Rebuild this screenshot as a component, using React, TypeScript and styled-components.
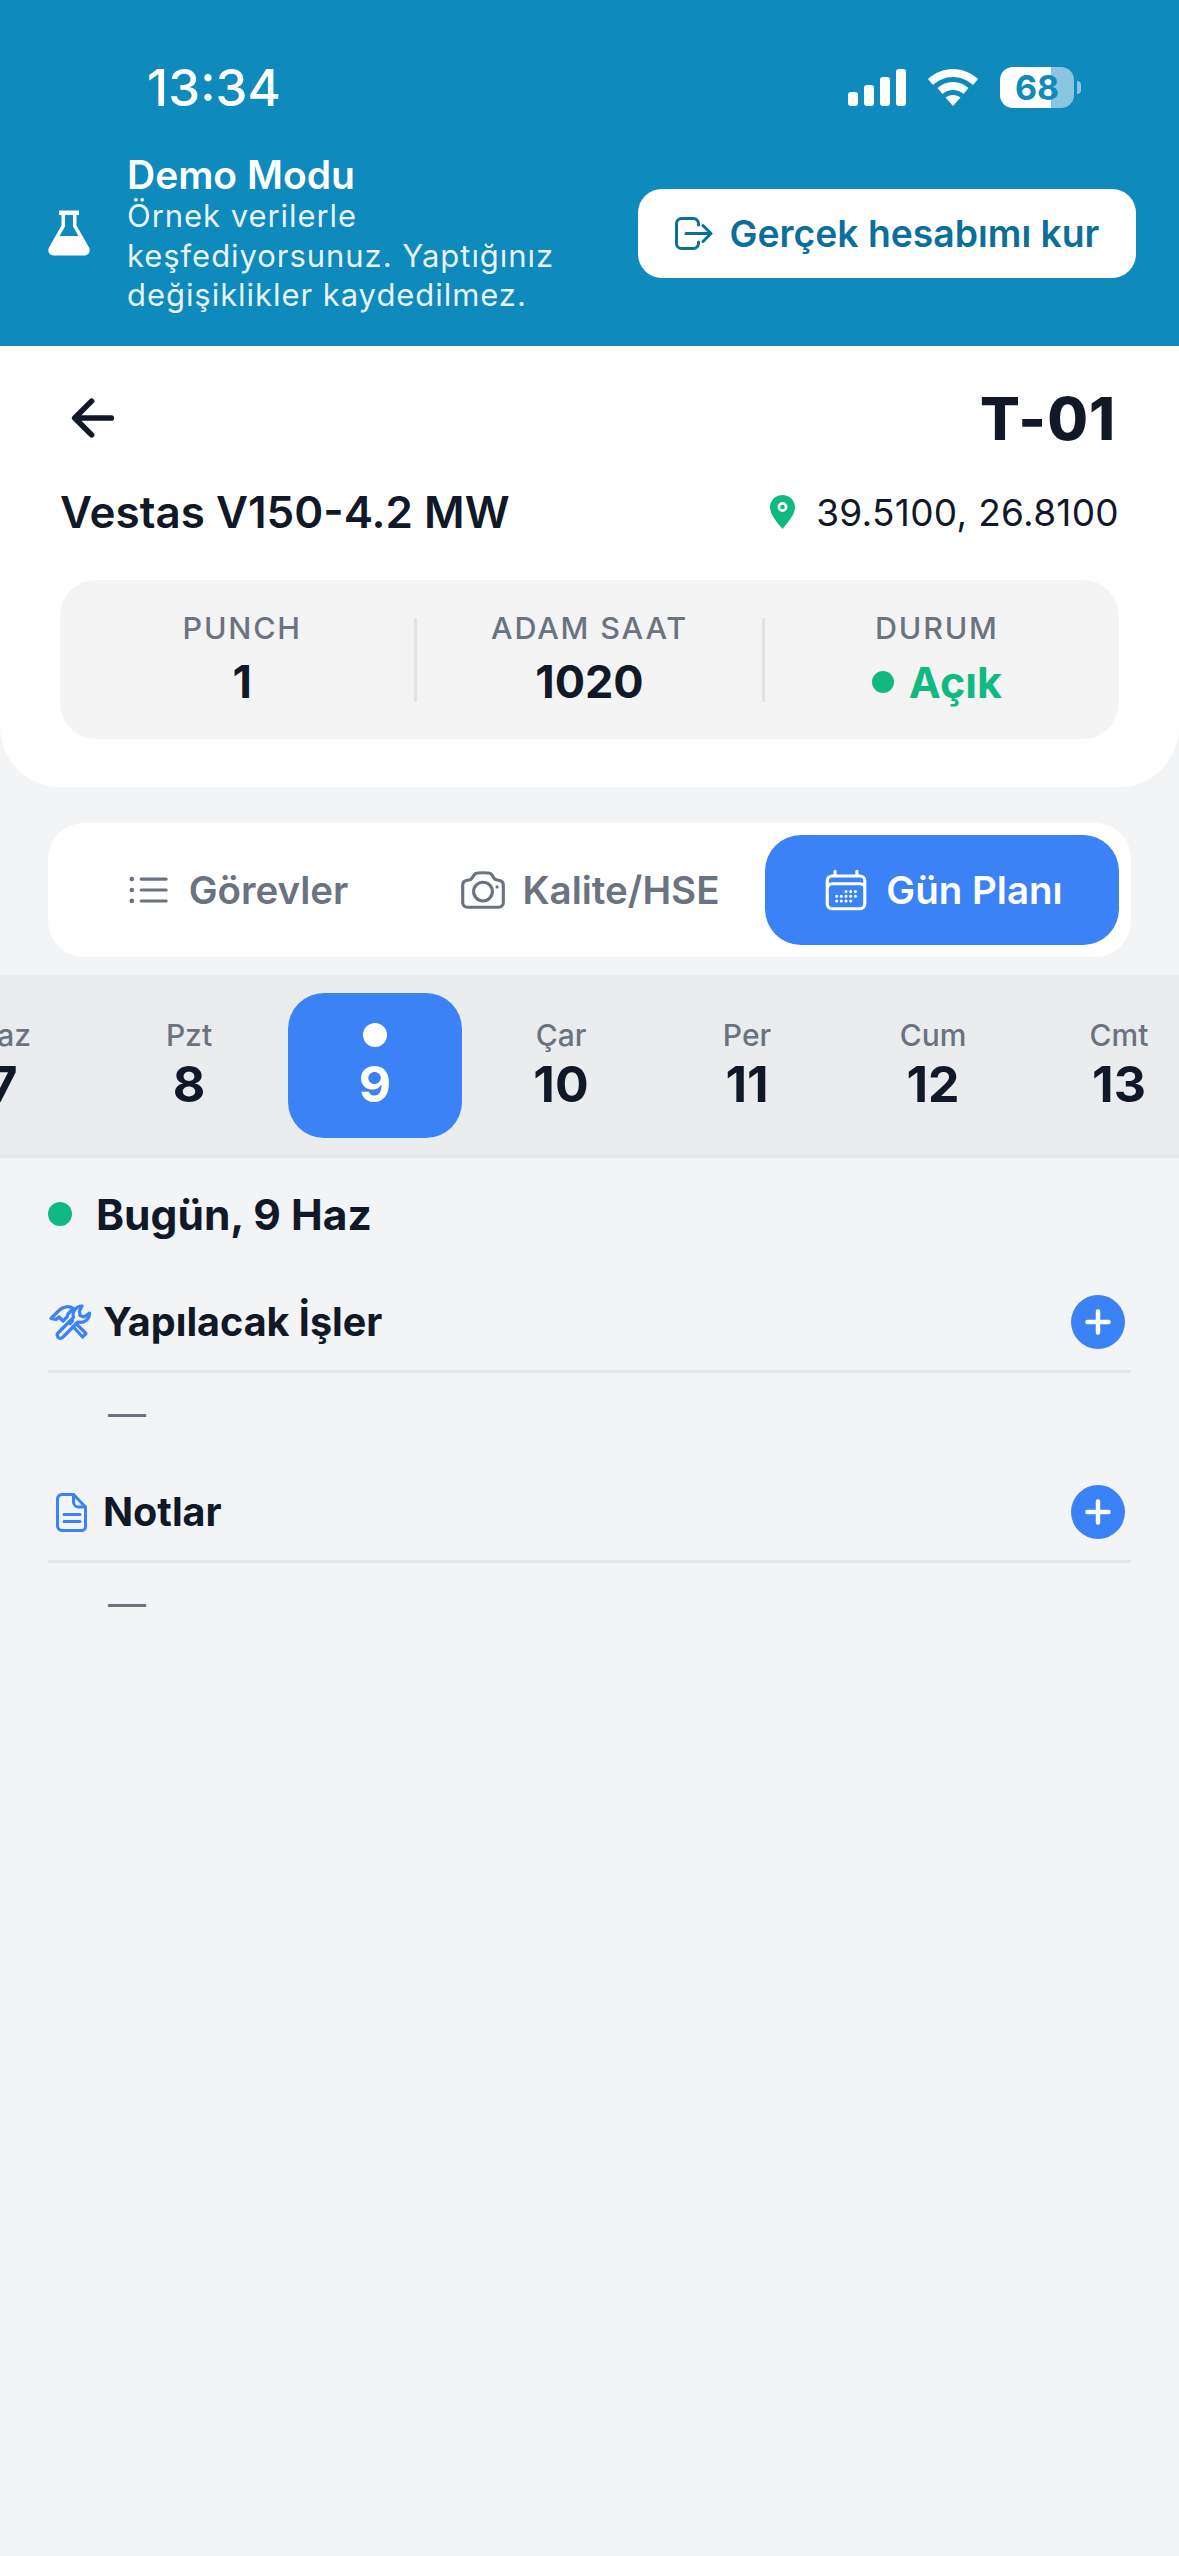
import React from "react";
import styled, { createGlobalStyle } from "styled-components";
import {
  HiOutlineListBullet,
  HiOutlineCamera,
  HiOutlineCalendarDays,
} from "react-icons/hi2";
import { IoArrowBack } from "react-icons/io5";

const GlobalStyle = createGlobalStyle`
  html, body {
    margin: 0;
    padding: 0;
    background: #f3f4f6;
    font-family: Inter, "Liberation Sans", sans-serif;
  }
`;

const days = [
  { name: "Haz", num: "7" },
  { name: "Pzt", num: "8" },
  { name: "", num: "9", active: true },
  { name: "Çar", num: "10" },
  { name: "Per", num: "11" },
  { name: "Cum", num: "12" },
  { name: "Cmt", num: "13" },
];

const Page = styled.div`
  width: 1179px;
  height: 2556px;
  overflow: hidden;
  background: #f3f4f6;
  color: #111827;
`;

const Banner = styled.div`
  height: 346px;
  box-sizing: border-box;
  background: #0e8abd;
  padding-top: 58px;
  color: #fff;
`;

const StatusBar = styled.div`
  display: flex;
  justify-content: space-between;
  align-items: center;
  height: 58px;
  padding: 0 98px 0 147px;
`;

const Clock = styled.div`
  font-size: 51px;
  font-weight: 500;
`;

const StatusIcons = styled.div`
  display: flex;
  align-items: center;
  gap: 22px;
`;

const Battery = styled.div`
  display: flex;
  align-items: center;
  gap: 3px;
`;

const BatteryBody = styled.div`
  width: 74px;
  height: 41px;
  border-radius: 13px;
  background: linear-gradient(to right, #fff 0 69%, #8ac6e0 69% 100%);
  color: #0e8abd;
  font-size: 34px;
  font-weight: 700;
  line-height: 41px;
  text-align: center;
`;

const BatteryCap = styled.div`
  width: 4px;
  height: 13px;
  border-radius: 0 4px 4px 0;
  background: #8ac6e0;
`;

const DemoRow = styled.div`
  display: flex;
  align-items: center;
  margin-top: 38px;
  padding: 0 43px 0 48px;
  > svg {
    margin-bottom: 3px;
  }
`;

const DemoText = styled.div`
  margin-left: 37px;
  flex: 1;
`;

const DemoTitle = styled.div`
  font-size: 39px;
  font-weight: 600;
  line-height: 42px;
`;

const DemoBody = styled.div`
  width: 450px;
  font-size: 31px;
  line-height: 39.5px;
  letter-spacing: 0.95px;
  color: rgba(255, 255, 255, 0.92);
`;

const SetupButton = styled.div`
  display: flex;
  align-items: center;
  justify-content: center;
  gap: 17px;
  width: 498px;
  height: 89px;
  margin-bottom: 1px;
  border-radius: 24px;
  background: #fff;
  color: #0c6f9b;
  font-size: 37.300px;
  font-weight: 600;
`;

const Header = styled.div`
  height: 441px;
  box-sizing: border-box;
  background: #fff;
  border-radius: 0 0 60px 60px;
  padding: 27px 60px 0;
`;

const TitleRow = styled.div`
  display: flex;
  justify-content: space-between;
  align-items: center;
  height: 90px;
`;

const BackIcon = styled(IoArrowBack)`
  width: 60px;
  height: 60px;
  margin-left: 3px;
`;

const Code = styled.div`
  margin-right: 3px;
  font-size: 59px;
  font-weight: 800;
  letter-spacing: 1px;
`;

const InfoRow = styled.div`
  display: flex;
  justify-content: space-between;
  align-items: center;
  margin-top: 19px;
  height: 60px;
`;

const Model = styled.div`
  font-size: 44px;
  font-weight: 600;
`;

const Coords = styled.div`
  display: flex;
  align-items: center;
  gap: 21px;
  font-size: 37px;
  letter-spacing: 0.3px;
`;

const Stats = styled.div`
  display: flex;
  align-items: center;
  height: 159px;
  margin-top: 38px;
  padding: 0 10px;
  border-radius: 36px;
  background: #f4f4f5;
`;

const Stat = styled.div`
  flex: 1;
  display: flex;
  flex-direction: column;
  align-items: center;
  gap: 9px;
`;

const StatDivider = styled.div`
  flex: none;
  width: 3px;
  height: 84px;
  background: #e2e3e6;
`;

const StatLabel = styled.div`
  font-size: 30.500px;
  line-height: 36px;
  font-weight: 500;
  letter-spacing: 1.8px;
  color: #6b7280;
`;

const StatValue = styled.div<{ $green?: boolean }>`
  display: flex;
  align-items: center;
  gap: 15px;
  font-size: ${(p) => (p.$green ? 43 : 45)}px;
  line-height: 54px;
  font-weight: 700;
  color: ${(p) => (p.$green ? "#10b981" : "#111827")};
`;

const GreenDot = styled.span`
  width: 22px;
  height: 22px;
  border-radius: 50%;
  background: #10b981;
`;

const Tabs = styled.div`
  display: flex;
  align-items: stretch;
  height: 134px;
  box-sizing: border-box;
  margin: 36px 48px 0;
  padding: 12px;
  border-radius: 36px;
  background: #fff;
`;

const Tab = styled.div<{ $active?: boolean; $width: number }>`
  display: flex;
  align-items: center;
  justify-content: center;
  gap: 15px;
  width: ${(p) => p.$width}px;
  border-radius: 36px;
  background: ${(p) => (p.$active ? "#3b82f6" : "transparent")};
  color: ${(p) => (p.$active ? "#fff" : "#6b7280")};
  font-size: 38.500px;
  font-weight: 600;
  svg {
    width: 50px;
    height: 50px;
  }
`;

const Strip = styled.div`
  display: flex;
  align-items: center;
  height: 183px;
  box-sizing: border-box;
  margin-top: 18px;
  overflow: hidden;
  background: #ebecee;
  border-bottom: 3px solid #e5e7eb;
`;

const DayList = styled.div`
  display: flex;
  gap: 12px;
  margin-left: -84px;
`;

const Day = styled.div<{ $active?: boolean }>`
  flex: none;
  width: 174px;
  height: 145px;
  box-sizing: border-box;
  padding-bottom: 8px;
  display: flex;
  flex-direction: column;
  align-items: center;
  justify-content: center;
  gap: 3px;
  border-radius: 36px;
  background: ${(p) => (p.$active ? "#3b82f6" : "transparent")};
`;

const DayName = styled.div`
  height: 42px;
  display: flex;
  align-items: center;
  font-size: 30px;
  font-weight: 500;
  color: #6b7280;
`;

const TodayDot = styled.span`
  width: 24px;
  height: 24px;
  border-radius: 50%;
  background: #fff;
`;

const DayNum = styled.div<{ $active?: boolean }>`
  font-size: 50px;
  line-height: 50px;
  font-weight: 700;
  color: ${(p) => (p.$active ? "#fff" : "#111827")};
`;

const Content = styled.div`
  padding: 0 48px;
`;

const TodayRow = styled.div`
  display: flex;
  align-items: center;
  gap: 24px;
  height: 48px;
  margin-top: 32px;
  margin-bottom: 57px;
  font-size: 42.500px;
  font-weight: 700;
`;

const TodayMark = styled.span`
  width: 24px;
  height: 24px;
  border-radius: 50%;
  background: #10b981;
`;

const Section = styled.div`
  margin-top: 32px;
`;

const SectionHead = styled.div`
  display: flex;
  align-items: center;
  padding-bottom: 21px;
  border-bottom: 3px solid #e5e7eb;
`;

const SectionIcon = styled.div`
  display: flex;
  justify-content: center;
  width: 46px;
  margin-right: 9px;
`;

const SectionTitle = styled.div`
  flex: 1;
  font-size: 39.500px;
  font-weight: 700;
`;

const AddButton = styled.div`
  display: flex;
  align-items: center;
  justify-content: center;
  width: 54px;
  height: 54px;
  margin-right: 6px;
  border-radius: 50%;
  background: #3b82f6;
`;

const Empty = styled.div`
  height: 80px;
  padding-left: 60px;
  display: flex;
  align-items: center;
  color: #6b7280;
  font-size: 38px;
`;

const FlaskIcon = () => (
  <svg width="42" height="47" viewBox="0 0 42 47" fill="none">
    <path
      d="M11 1.500h20v4.500h-2.500v10.500l12.500 22c2 4-.5 8-5 8H6c-4.500 0-7-4-5-8l12.500-22V6H11z"
      fill="#fff"
    />
    <path d="M17 6h8v11.500L30.500 27h-19L17 17.500z" fill="#0e8abd" />
  </svg>
);

const SignalIcon = () => (
  <svg width="58" height="37" viewBox="0 0 58 37" fill="#fff">
    <rect x="0" y="23" width="10" height="14" rx="3" />
    <rect x="16" y="16" width="10" height="21" rx="3" />
    <rect x="32" y="8" width="10" height="29" rx="3" />
    <rect x="48" y="0" width="10" height="37" rx="3" />
  </svg>
);

const WifiIcon = () => (
  <svg width="50" height="37" viewBox="0 0 50 37" fill="#fff">
    <path d="M25 0c9.500 0 18 3.700 25 10l-5 6c-5.500-5-12.300-8-20-8S10.500 11 5 16L0 10C7 3.700 15.500 0 25 0z" />
    <path d="M25 13c6 0 11 2.300 15.500 6l-5 6c-3-2.500-6.500-4-10.500-4s-7.500 1.500-10.500 4l-5-6C14 15.300 19 13 25 13z" />
    <path d="M25 26c3 0 5.500 1 7.500 2.500L25 37l-7.500-8.500C19.500 27 22 26 25 26z" />
  </svg>
);

const ExitIcon = () => (
  <svg width="38" height="33" viewBox="0 0 38 33" fill="none" stroke="#0c6f9b" strokeWidth="3" strokeLinecap="round" strokeLinejoin="round">
    <path d="M23.500 8V6.500a5 5 0 0 0-5-5h-12a5 5 0 0 0-5 5v20a5 5 0 0 0 5 5h12a5 5 0 0 0 5-5V25" />
    <path d="M11 16.500h25M28 8.500l8 8-8 8" />
  </svg>
);

const PinIcon = () => (
  <svg width="25" height="34" viewBox="0 0 25 34">
    <path d="M12.500 0C5.600 0 0 5.500 0 12.300 0 20 8 28.500 12.500 34 17 28.500 25 20 25 12.300 25 5.500 19.400 0 12.500 0z" fill="#10b981" />
    <circle cx="12.500" cy="12" r="3.600" fill="none" stroke="#fff" strokeWidth="2.600" />
  </svg>
);

const ToolsIcon = () => (
  <svg width="44" height="36" viewBox="0 0 44 36" fill="none" stroke="#3b82f6" strokeWidth="3.200" strokeLinecap="round" strokeLinejoin="round">
    <path d="M33 2a9 9 0 0 0-8.500 11.500L9 29a3.200 3.200 0 0 0 4.500 4.500L29 18a9 9 0 0 0 11.500-9L35 13l-4-1.500L30.500 7z" />
    <path d="M2 14.500 10.500 6C14 2.500 20 1.500 24.500 4.500l-5.500 5.500 -1 3-4 4-4-4-3 2.500z" />
    <path d="M21 19.500 23.500 17M24 22.500l9.500 10.500 3.500-3.500-10-10" />
  </svg>
);

const NoteIcon = () => (
  <svg width="31" height="39" viewBox="0 0 31 39" fill="none" stroke="#3b82f6" strokeWidth="3" strokeLinecap="round" strokeLinejoin="round">
    <path d="M6 1.500h11.500L29.500 14v19.500a4 4 0 0 1-4 4H6a4.500 4.500 0 0 1-4.500-4.500V6A4.500 4.500 0 0 1 6 1.500z" />
    <path d="M17.500 1.500V9a5 5 0 0 0 5 5h7M8 21.500h16M8 28.500h16" />
  </svg>
);

const PlusIcon = () => (
  <svg width="26" height="26" viewBox="0 0 26 26" fill="none" stroke="#fff" strokeWidth="4.500" strokeLinecap="round">
    <path d="M13 2.500v21M2.500 13h21" />
  </svg>
);

const App = () => {
  return (
    <Page>
      <GlobalStyle />
      <Banner>
        <StatusBar>
          <Clock>13:34</Clock>
          <StatusIcons>
            <SignalIcon />
            <WifiIcon />
            <Battery>
              <BatteryBody>68</BatteryBody>
              <BatteryCap />
            </Battery>
          </StatusIcons>
        </StatusBar>
        <DemoRow>
          <FlaskIcon />
          <DemoText>
            <DemoTitle>Demo Modu</DemoTitle>
            <DemoBody>Örnek verilerle keşfediyorsunuz. Yaptığınız değişiklikler kaydedilmez.</DemoBody>
          </DemoText>
          <SetupButton>
            <ExitIcon />
            Gerçek hesabımı kur
          </SetupButton>
        </DemoRow>
      </Banner>

      <Header>
        <TitleRow>
          <BackIcon />
          <Code>T-01</Code>
        </TitleRow>
        <InfoRow>
          <Model>Vestas V150-4.2 MW</Model>
          <Coords>
            <PinIcon />
            39.5100, 26.8100
          </Coords>
        </InfoRow>
        <Stats>
          <Stat>
            <StatLabel>PUNCH</StatLabel>
            <StatValue>1</StatValue>
          </Stat>
          <StatDivider />
          <Stat>
            <StatLabel>ADAM SAAT</StatLabel>
            <StatValue>1020</StatValue>
          </Stat>
          <StatDivider />
          <Stat>
            <StatLabel>DURUM</StatLabel>
            <StatValue $green>
              <GreenDot />
              Açık
            </StatValue>
          </Stat>
        </Stats>
      </Header>

      <Tabs>
        <Tab $width={352}>
          <HiOutlineListBullet />
          Görevler
        </Tab>
        <Tab $width={353}>
          <HiOutlineCamera />
          Kalite/HSE
        </Tab>
        <Tab $active $width={354}>
          <HiOutlineCalendarDays />
          Gün Planı
        </Tab>
      </Tabs>

      <Strip>
        <DayList>
          {days.map((d) => (
            <Day key={d.num} $active={d.active}>
              <DayName>{d.active ? <TodayDot /> : d.name}</DayName>
              <DayNum $active={d.active}>{d.num}</DayNum>
            </Day>
          ))}
        </DayList>
      </Strip>

      <Content>
        <TodayRow>
          <TodayMark />
          Bugün, 9 Haz
        </TodayRow>
        <Section>
          <SectionHead>
            <SectionIcon>
              <ToolsIcon />
            </SectionIcon>
            <SectionTitle>Yapılacak İşler</SectionTitle>
            <AddButton>
              <PlusIcon />
            </AddButton>
          </SectionHead>
          <Empty>—</Empty>
        </Section>
        <Section>
          <SectionHead>
            <SectionIcon>
              <NoteIcon />
            </SectionIcon>
            <SectionTitle>Notlar</SectionTitle>
            <AddButton>
              <PlusIcon />
            </AddButton>
          </SectionHead>
          <Empty>—</Empty>
        </Section>
      </Content>
    </Page>
  );
};

export default App;
